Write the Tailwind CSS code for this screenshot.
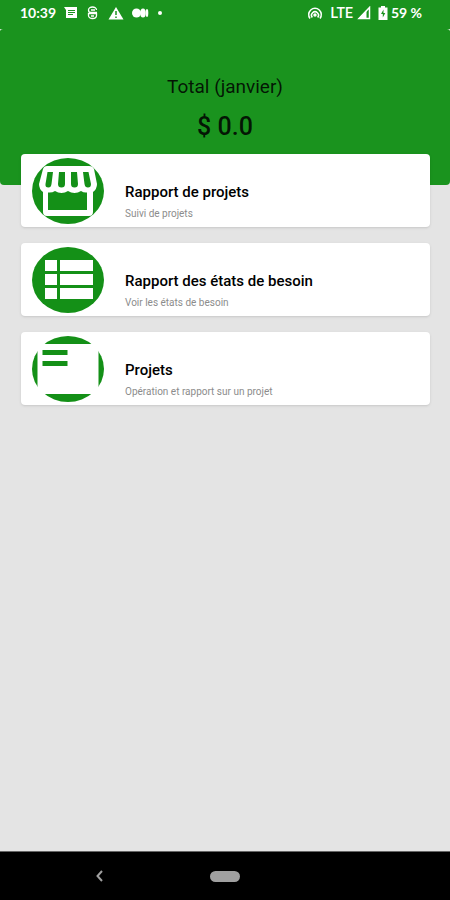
<!DOCTYPE html>
<html lang="fr">

<head>
    <meta charset="UTF-8" />
    <meta name="viewport" content="width=device-width, initial-scale=1.0">
    <script src="https://cdn.jsdelivr.net/npm/@tailwindcss/browser@4"></script>
    <title>Rapports</title>
</head>

<body class="min-h-screen flex flex-col bg-[#e4e4e4] font-[Roboto,sans-serif] text-black">
    <header class="bg-[#1a931e] rounded-b-[4px]">
        <!-- status bar -->
        <div class="h-7 flex items-center justify-between pb-0.5 pl-5 pr-7 text-white text-sm font-medium">
            <div class="flex items-center gap-2">
                <span class="font-[Lato,sans-serif] font-bold">10:39</span>
                <svg class="w-3.5 h-3" viewBox="0 0 14 12" fill="none">
                    <path d="M0 0h13v11H2V3z" fill="#fff" />
                    <path d="M4 3.5h7M4 5.5h7M4 7.5h5" stroke="#1a931e" />
                </svg>
                <svg class="w-3.5 h-3.5" viewBox="0 0 14 14" fill="none" stroke="#fff" stroke-width="1.3">
                    <path d="M10.500 4C10.500 0 2.500 0 2.500 4c0 1.500 1 2.500 2.500 2.500h6M2.500 7.500h8v2c0 4-8 4-8 0zM5 4h4M5 10h3" />
                </svg>
                <svg class="w-4 h-3.5" viewBox="0 0 16 14" fill="none">
                    <path d="M8 1l7.500 12.500H.5z" fill="#fff" />
                    <path d="M8 5v4M8 10.500v1.500" stroke="#1a931e" stroke-width="1.500" />
                </svg>
                <svg class="w-[18px] h-3" viewBox="0 0 18 12" fill="#fff">
                    <circle cx="4.500" cy="6" r="4.500" />
                    <ellipse cx="11" cy="6" rx="2.800" ry="4.500" />
                    <ellipse cx="15" cy="6" rx="1.300" ry="4" />
                </svg>
                <span class="w-1 h-1 rounded-full bg-white"></span>
            </div>
            <div class="flex items-center gap-1">
                <svg class="w-4 h-3.5 mr-1" viewBox="0 0 16 14" fill="none" stroke="#fff" stroke-width="1.500">
                    <path d="M3 12.500a6.300 6.300 0 1 1 10 0" />
                    <path d="M5.300 11.500a3.500 3.500 0 1 1 5.400 0" />
                    <circle cx="8" cy="9" r="1" fill="#fff" />
                </svg>
                <span class="font-[Roboto,sans-serif]">LTE</span>
                <svg class="w-3.5 h-3.5" viewBox="0 0 14 14">
                    <path d="M12.500 1.500v11H2z" fill="none" stroke="#fff" stroke-width="1.500" />
                    <path d="M9.500 4v9H1z" fill="#fff" />
                </svg>
                <div class="flex items-center gap-0.5 ml-0.5">
                    <svg class="w-3 h-3.5" viewBox="0 0 12 14">
                        <path d="M4 0h4v1.500h2.500V14h-9V1.500H4z" fill="#fff" />
                        <path d="M6.500 3.500L4 8h1.800v3.500L8.300 7H6.500z" fill="#1a931e" />
                    </svg>
                    <span class="font-[Lato,sans-serif] font-bold">59 %</span>
                </div>
            </div>
        </div>
        <div class="flex justify-between">
            <svg class="w-1 h-1" viewBox="0 0 4 4">
                <path d="M0 1h3Q1 1 0 3z" fill="#c8e2c8" />
            </svg>
            <svg class="w-1 h-1" viewBox="0 0 4 4">
                <path d="M4 1H1q2 0 3 2z" fill="#c8e2c8" />
            </svg>
        </div>
        <div class="flex flex-col items-center gap-3 pt-[43px] pb-[42px]">
            <h1 class="text-[19px] leading-6 text-black/85">Total (janvier)</h1>
            <p class="text-[25px] leading-8 font-medium text-black/85">$ 0.0</p>
        </div>
    </header>

    <main class="relative grow flex flex-col gap-4 -mt-[31px] pl-[21px] pr-5">
        <a href="#" class="flex h-[73px] items-center gap-[21px] rounded-[4px] bg-white pl-[11px] shadow-sm">
            <svg class="w-[72px] h-[66px] shrink-0" viewBox="0 0 72 66">
                <ellipse cx="36" cy="33" rx="36" ry="33" fill="#149017" />
                <path d="M15 8h42q4 0 5 3l3 15q0 5-4 8v20q0 4-4 4H15q-4 0-4-4V34q-4-3-4-8l4-15q1-3 4-3z" fill="#fff" />
                <path d="M15.500 14H21l-1.500 12q-.5 3.500-3 3.500-3.500 0-3-3.500zM27 14h6v12q0 3.500-3.500 3.500T26 26zM39 14h6l1 12q0 3.500-3.500 3.500T39 26zM51 14h5.500l2.500 12q0 3.500-3 3.500t-3.500-3.500z" fill="#149017" />
                <path d="M16 34.500q4 .5 7-1.500 3 2 6.500 2t6.500-2q3 2 6.500 2t6.500-2q3 2 6 1.500V52H16z" fill="#149017" />
            </svg>
            <div class="pt-[22px]">
                <h2 class="text-[15px] leading-6 font-medium">Rapport de projets</h2>
                <p class="text-[10px] leading-5 text-[#8c8c8c]">Suivi de projets</p>
            </div>
        </a>

        <a href="#" class="flex h-[73px] items-center gap-[21px] rounded-[4px] bg-white pl-[11px] shadow-sm">
            <svg class="w-[72px] h-[66px] shrink-0" viewBox="0 0 72 66">
                <ellipse cx="36" cy="33" rx="36" ry="33" fill="#149017" />
                <path d="M13 13h12v11H13zM28 13h33v11H28zM13 27h12v11H13zM28 27h33v11H28zM13 41h12v11H13zM28 41h33v11H28z" fill="#fff" />
            </svg>
            <div class="pt-[22px]">
                <h2 class="text-[15px] leading-6 font-medium">Rapport des états de besoin</h2>
                <p class="text-[10px] leading-5 text-[#8c8c8c]">Voir les états de besoin</p>
            </div>
        </a>

        <a href="#" class="flex h-[73px] items-center gap-[21px] rounded-[4px] bg-white pl-[11px] shadow-sm">
            <svg class="w-[72px] h-[66px] shrink-0" viewBox="0 0 72 66">
                <ellipse cx="36" cy="33" rx="36" ry="33" fill="#149017" />
                <path d="M5.500 8h61v50h-61z" fill="#fff" />
                <path d="M10.500 14h25v5h-25zM10.500 25h25v5h-25z" fill="#149017" />
            </svg>
            <div class="pt-[22px]">
                <h2 class="text-[15px] leading-6 font-medium">Projets</h2>
                <p class="text-[10px] leading-5 text-[#8c8c8c]">Opération et rapport sur un projet</p>
            </div>
        </a>
    </main>

    <!-- android navigation -->
    <nav class="grid grid-cols-[1fr_30px_1fr] items-center h-[49px] bg-black border-t border-[#666]">
        <button type="button" aria-label="Retour" class="justify-self-center pr-3">
            <svg class="w-3 h-3" viewBox="0 0 12 12" fill="none" stroke="#a0a0a0" stroke-width="2">
                <path d="M9 1L4.500 6 9 11" />
            </svg>
        </button>
        <button type="button" aria-label="Accueil" class="h-[11px] rounded-full bg-[#a0a0a0]"></button>
    </nav>
</body>

</html>
